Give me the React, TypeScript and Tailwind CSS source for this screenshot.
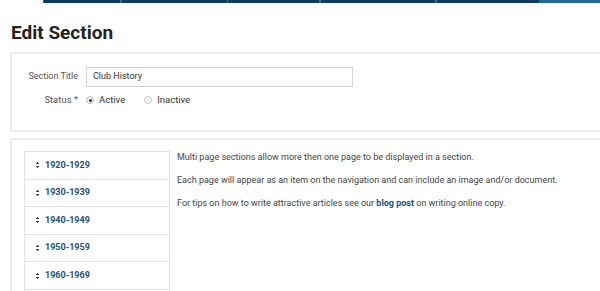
import React from 'react';

const decades = ['1920-1929', '1930-1939', '1940-1949', '1950-1959', '1960-1969'];

const DragHandle: React.FC = () => (
    <svg width="5" height="8" viewBox="0 0 5 8" className="shrink-0">
        <path d="M2.5 0.8 L4.3 3 L0.7 3 Z" fill="#333" />
        <path d="M2.5 7.2 L4.3 5 L0.7 5 Z" fill="#333" />
    </svg>
);

const App: React.FC = () => {
    return (
        <div className="w-[600px] h-[291px] overflow-hidden bg-white relative" style={{ fontFamily: 'Roboto, "Liberation Sans", sans-serif' }}>
            {/* top nav strip */}
            <div className="flex h-[3px] ml-[43px]">
                <div className="w-[77px] bg-[#0c3b5c] border-l border-[#2c6d93]" />
                <div className="w-[107px] bg-[#0c3b5c] border-l-2 border-[#2c6d93]" />
                <div className="w-[92px] bg-[#0c3b5c] border-l border-[#2c6d93]" />
                <div className="w-[116px] bg-[#0c3b5c] border-l-2 border-[#2c6d93]" />
                <div className="w-[104px] bg-[#0c3b5c] border-l-2 border-[#2c6d93]" />
                <div className="flex-1 bg-[#1c6b92]" />
            </div>

            <h1 className="ml-[11px] mt-[18px] text-[19px] leading-[23px] font-bold text-[#222]">Edit Section</h1>

            <div className="ml-[10px] mt-[8px] -mr-[10px] h-[80px] border-2 border-[#ececec] pt-[13px]">
                <div className="flex items-center h-[20px]">
                    <span className="w-[66px] text-right text-[9px] text-[#555]">Section Title</span>
                    <div className="ml-[8px] w-[267px] h-[20px] border border-[#d4d4d4] flex items-center px-[6px] text-[9px] text-[#333]">Club History</div>
                </div>
                <div className="flex items-center h-[20px] mt-[3px] text-[9.5px]">
                    <span className="w-[66px] text-right text-[#555]">Status *</span>
                    <span className="ml-[8px] w-[8px] h-[8px] rounded-full border border-[#bbb] bg-[#f4f4f4] flex items-center justify-center">
                        <span className="w-[3px] h-[3px] rounded-full bg-[#333]" />
                    </span>
                    <span className="ml-[5px] text-[#333]">Active</span>
                    <span className="ml-[19px] w-[8px] h-[8px] rounded-full border border-[#ccc] bg-[#f4f4f4]" />
                    <span className="ml-[5px] text-[#333]">Inactive</span>
                </div>
            </div>

            <div className="ml-[10px] mt-[6px] -mr-[10px] h-[200px] border-2 border-[#ececec] pt-[11px] pl-[12px] flex">
                <div className="w-[146px] border border-[#e3e3e3] border-b-0 shrink-0">
                    {decades.map(d => (
                        <div key={d} className="h-[27.6px] border-b border-[#e3e3e3] flex items-center pl-[10px] gap-[5px]">
                            <DragHandle />
                            <span className="text-[9px] font-bold text-[#1d5279]">{d}</span>
                        </div>
                    ))}
                    <div className="h-[27.6px]" />
                </div>
                <div className="ml-[7px] text-[9px] text-[#444] leading-[12px] flex flex-col gap-[11px]">
                    <p>Multi page sections allow more then one page to be displayed in a section.</p>
                    <p>Each page will appear as an item on the navigation and can include an image and/or document.</p>
                    <p>For tips on how to write attractive articles see our <span className="font-bold text-[#1d5279]">blog post</span> on writing online copy.</p>
                </div>
            </div>
        </div>
    );
};

export default App;
